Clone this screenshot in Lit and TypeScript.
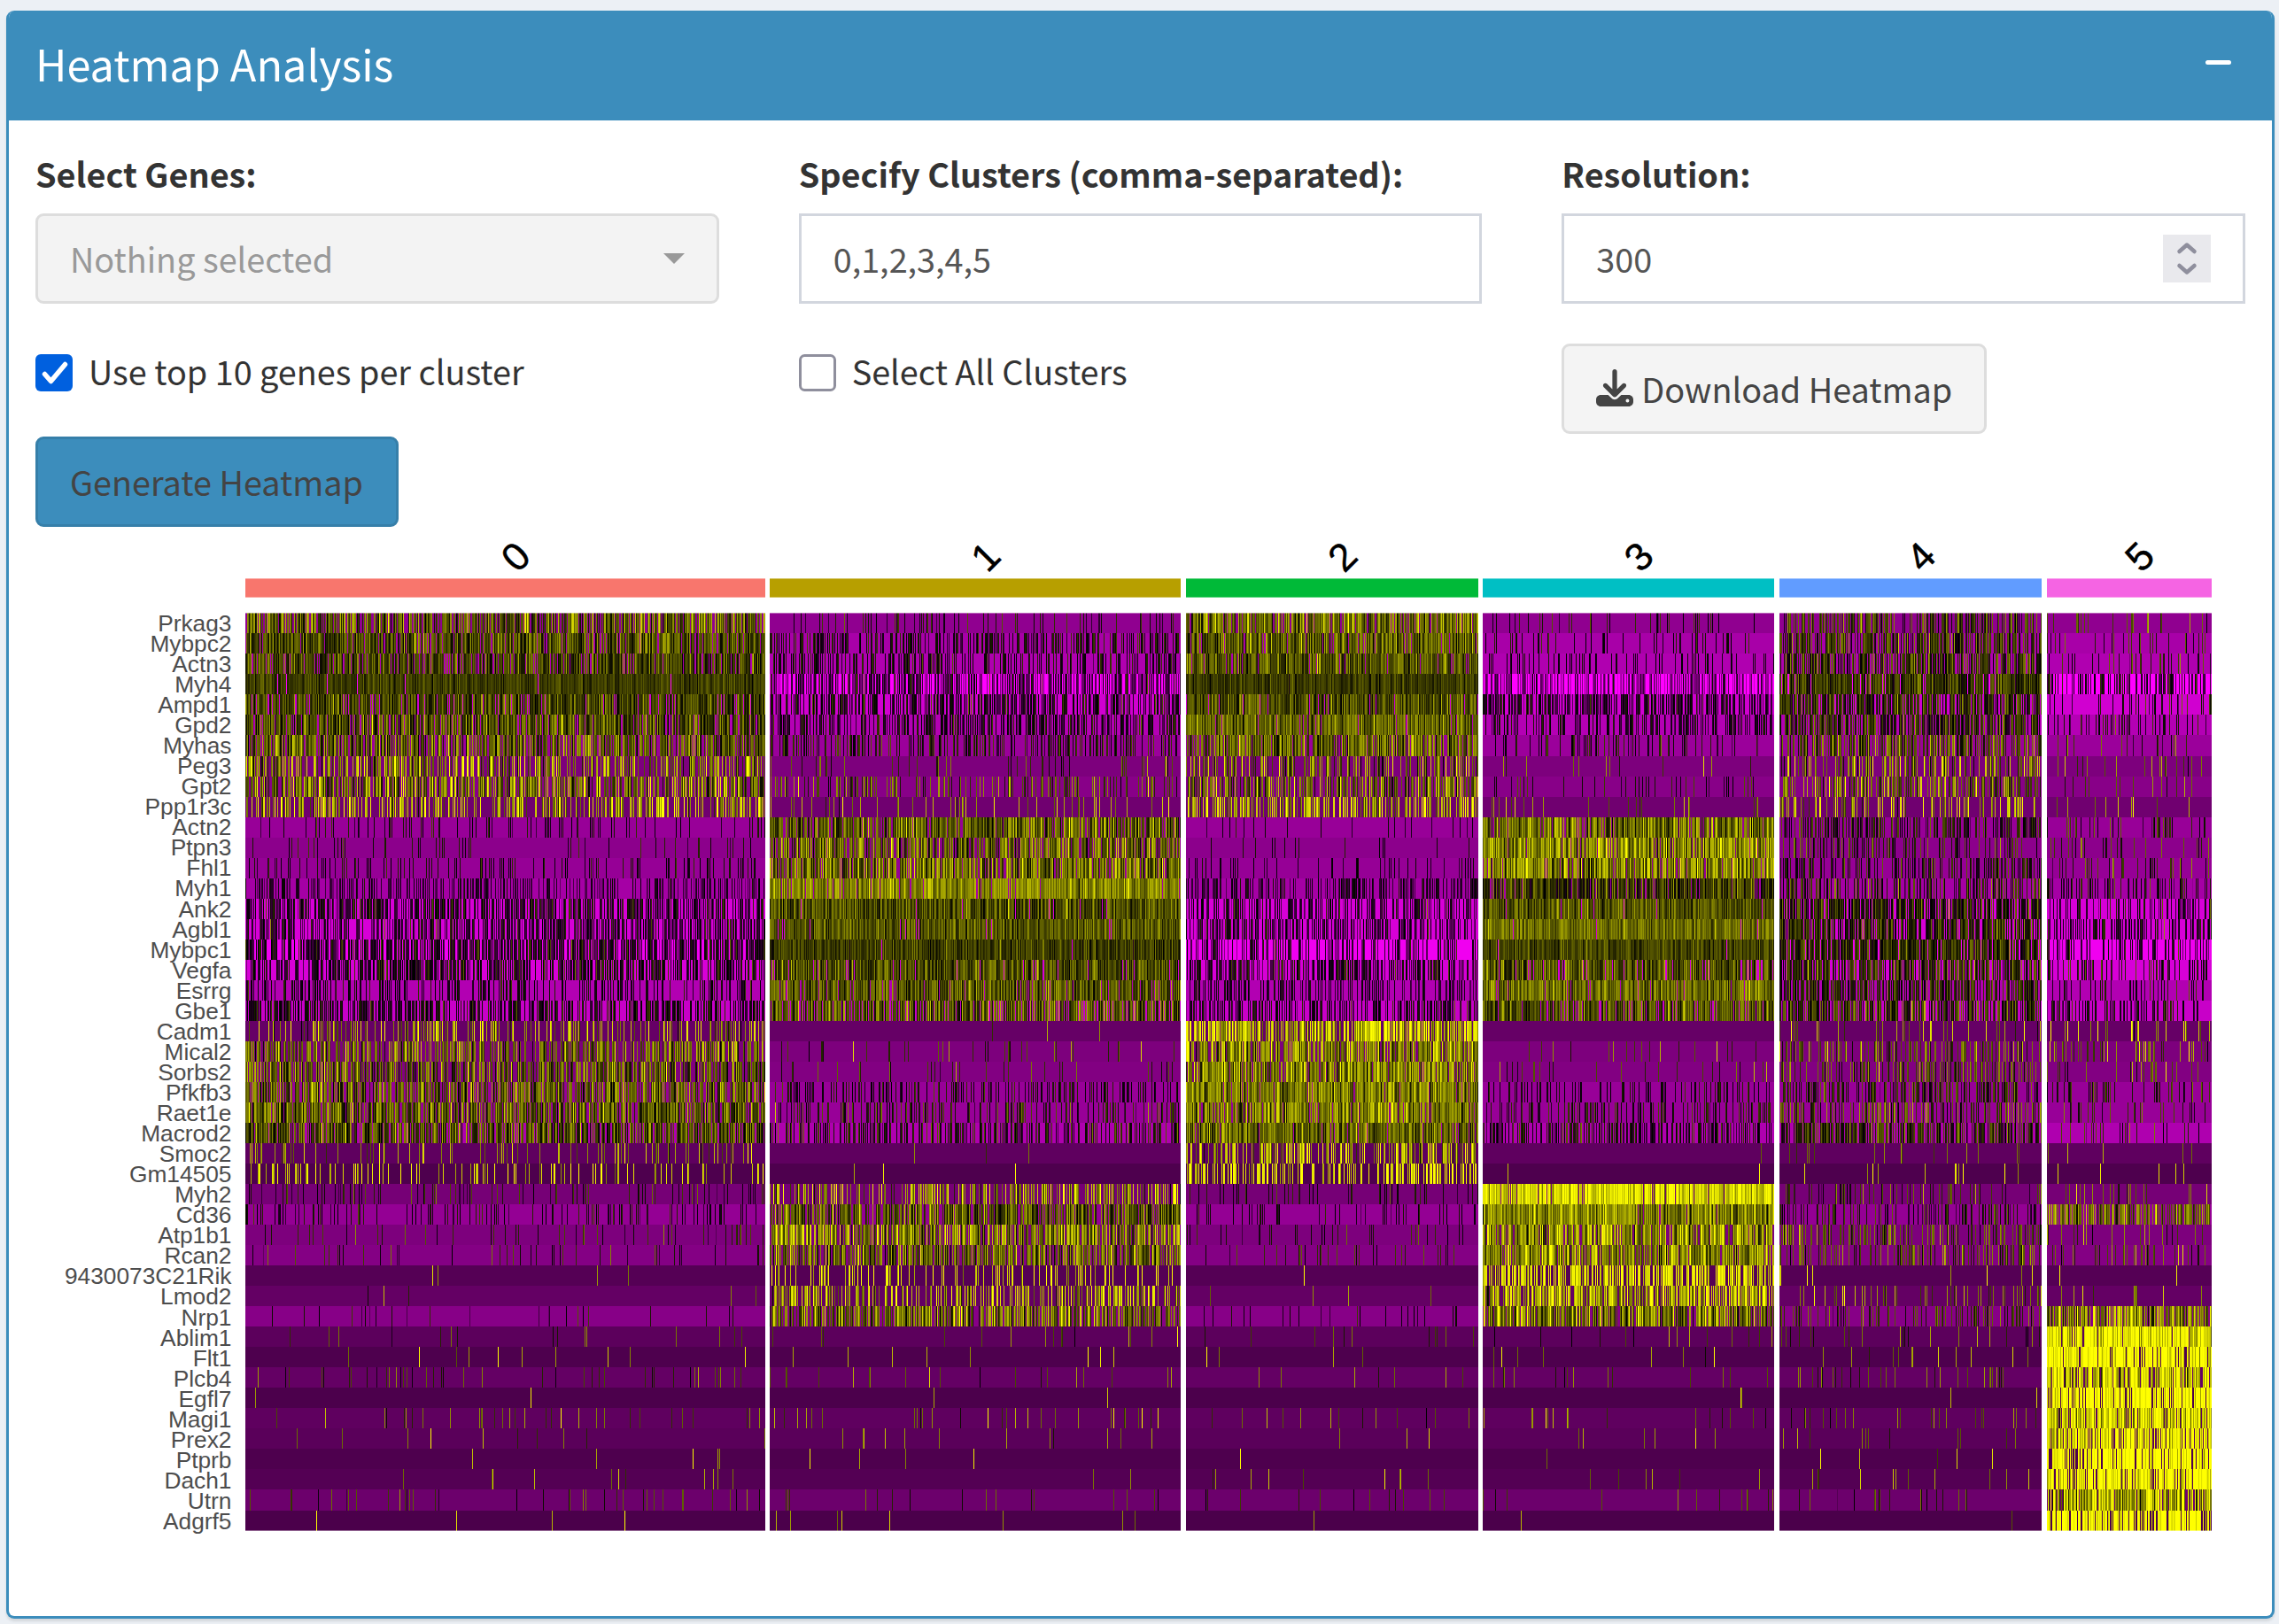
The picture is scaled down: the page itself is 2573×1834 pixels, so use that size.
import { LitElement, html, svg, css } from "lit";
import { customElement } from "lit/decorators.js";

interface Cluster {
  name: string;
  start: number;
  end: number;
  color: string;
}

const CLUSTERS: Cluster[] = [
  { name: "0", start: 277, end: 864, color: "#f8766d" },
  { name: "1", start: 869, end: 1333, color: "#b79f00" },
  { name: "2", start: 1339, end: 1669, color: "#00ba38" },
  { name: "3", start: 1674, end: 2003, color: "#00bfc4" },
  { name: "4", start: 2009, end: 2305, color: "#619cff" },
  { name: "5", start: 2311, end: 2497, color: "#f564e3" },
];

// gene | magenta level of non-expressing cells | per cluster: share of expressing cells, mean, spread
const GENES = `
Prkag3|144|.75 95 65|.14 20 40|.87 110 60|.1 20 35|.5 60 60|.1 90 70
Mybpc2|168|.88 75 50|.42 5 35|.93 90 50|.15 5 25|.65 50 50|.13 30 40
Actn3|176|.87 65 45|.38 0 35|.95 85 45|.15 -5 20|.72 50 50|.2 30 50
Myh4|255|.99 60 22|.68 -70 65|1 55 22|.5 -110 50|.94 55 40|.4 -20 40
Ampd1|208|.92 65 45|.5 -10 40|.95 75 45|.6 -30 40|.8 40 45|.2 10 40
Gpd2|180|.88 75 50|.5 -10 40|.95 100 40|.4 -20 30|.7 40 50|.2 10 40
Myhas|155|.75 90 60|.35 25 40|.85 100 60|.2 15 40|.6 70 60|.12 40 50
Peg3|125|.52 140 80|.1 70 70|.4 110 80|.06 80 80|.4 130 80|.07 110 80
Gpt2|136|.65 115 75|.25 80 70|.6 110 75|.1 20 40|.5 115 70|.08 80 60
Ppp1r3c|112|.45 175 70|.09 150 60|.5 180 70|.06 130 60|.3 170 70|.05 150 60
Actn2|152|.13 0 30|.85 95 60|.06 -10 20|.88 110 60|.5 25 45|.15 40 60
Ptpn3|140|.07 15 30|.78 105 65|.04 5 20|.93 140 60|.35 40 55|.1 50 50
Fhl1|150|.17 5 25|.8 110 65|.15 -10 20|.88 125 60|.4 20 45|.17 50 60
Myh1|165|.42 -35 35|.94 135 40|.45 -35 35|.92 50 50|.45 30 60|.35 0 50
Ank2|215|.6 -25 50|.97 75 45|.5 -40 45|.98 85 35|.8 25 45|.35 -20 50
Agbl1|215|.6 -40 50|.97 90 35|.5 -40 45|.99 110 35|.75 35 50|.4 -20 40
Mybpc1|240|.7 -20 45|.99 60 30|.4 -50 50|.99 65 28|.9 45 40|.38 -40 50
Vegfa|215|.6 -5 45|.93 75 45|.6 -20 45|.9 75 50|.75 40 55|.3 0 40
Esrrg|178|.35 -5 30|.93 85 45|.35 -30 30|.95 110 40|.7 30 45|.2 10 40
Gbe1|200|.6 -5 40|.8 80 60|.45 -15 40|.9 80 50|.7 50 60|.3 0 40
Cadm1|102|.3 160 70|.01 150 70|.75 200 70|.004 90 40|.1 140 70|.1 150 80
Mical2|125|.6 115 65|.07 70 60|.82 150 65|.05 70 60|.3 95 65|.15 110 60
Sorbs2|130|.65 90 65|.09 60 50|.85 130 65|.08 60 50|.35 80 60|.15 110 60
Pfkfb3|152|.75 95 60|.28 5 30|.95 125 50|.22 0 25|.5 40 50|.25 30 40
Raet1e|152|.8 90 60|.28 30 50|.93 125 55|.3 20 40|.45 65 60|.1 40 40
Macrod2|175|.8 65 60|.45 15 45|.94 100 50|.5 0 40|.6 40 55|.12 20 50
Smoc2|95|.14 140 70|.01 90 50|.45 190 70|.01 90 50|.05 100 60|.03 150 60
Gm14505|78|.16 230 50|.004 240 40|.42 235 40|.004 230 40|.04 210 50|.02 230 40
Myh2|118|.14 15 45|.42 170 80|.14 15 30|.95 220 50|.18 50 60|.12 100 80
Cd36|148|.16 0 30|.78 80 60|.15 -5 30|.96 130 55|.35 20 50|.7 120 60
Atp1b1|125|.08 45 50|.75 135 70|.06 30 40|.85 145 65|.38 90 60|.12 90 60
Rcan2|132|.07 40 50|.75 105 65|.1 45 45|.9 130 65|.33 80 60|.15 80 60
9430073C21Rik|85|.006 200 50|.18 220 50|.006 170 60|.6 225 45|.03 200 60|.01 240 30
Lmod2|100|.012 130 60|.42 180 70|.01 110 50|.7 190 65|.14 130 60|.03 120 60
Nrp1|135|.03 0 40|.75 105 70|.09 -5 30|.85 115 70|.28 50 50|.8 130 75
Ablim1|92|.03 60 50|.025 110 70|.02 70 50|.03 100 70|.06 80 60|.97 240 60
Flt1|78|.022 180 60|.02 200 60|.015 160 60|.01 160 70|.035 130 60|.86 260 50
Plcb4|100|.07 60 50|.04 110 60|.035 90 60|.04 90 60|.09 80 60|.88 215 70
Egfl7|76|.006 180 60|.012 180 60|.006 170 60|.006 160 60|.006 200 50|.82 265 50
Magi1|95|.06 100 60|.06 120 70|.05 90 60|.05 110 70|.08 80 60|.9 215 65
Prex2|90|.016 130 60|.02 130 60|.012 120 60|.015 110 60|.022 100 50|.8 240 60
Ptprb|78|.008 200 50|.01 200 60|.008 180 60|.006 180 60|.014 200 60|.76 265 40
Dach1|84|.014 140 60|.013 130 60|.03 160 70|.015 130 60|.03 130 60|.83 260 50
Utrn|108|.05 50 60|.04 60 50|.03 30 40|.04 70 50|.04 40 50|.88 170 80
Adgrf5|75|.008 190 60|.012 170 60|.006 180 60|.006 160 60|.008 140 60|.77 262 40`
  .trim()
  .split("\n")
  .map((line) => {
    const [name, base, ...stats] = line.split("|");
    return { name, base: Number(base), stats: stats.map((s) => s.split(" ").map(Number)) };
  });

const TOP = 692;
const rowHeight = (i: number) => (i === 6 || i === 43 ? 24 : 23);
const ROWS: { y: number; h: number }[] = [];
GENES.reduce((y, _, i) => {
  ROWS.push({ y, h: rowHeight(i) });
  return y + rowHeight(i);
}, TOP);
const BOTTOM = 1729;

function randomSource(seed: number) {
  let a = seed;
  return () => {
    a = (a + 0x6d2b79f5) | 0;
    let t = Math.imul(a ^ (a >>> 15), 1 | a);
    t = (t + Math.imul(t ^ (t >>> 7), 61 | t)) ^ t;
    return ((t ^ (t >>> 14)) >>> 0) / 4294967296;
  };
}

function shade(v: number): string {
  const n = Math.min(255, Math.abs(v));
  return v < 0 ? `rgb(${n},0,${n})` : `rgb(${n},${n},0)`;
}

// Cells of one colour are collected into a single path.
function buildCells(): [string, string][] {
  const rand = randomSource(4117);
  const gauss = () => Math.sqrt(-2 * Math.log(rand() + 1e-9)) * Math.cos(2 * Math.PI * rand());
  const paths = new Map<number, string[]>();
  const add = (v: number, x0: number, x1: number, y: number, h: number) => {
    if (!paths.has(v)) paths.set(v, []);
    paths.get(v)!.push(`M${x0} ${y}h${x1 - x0}v${h}h${x0 - x1}z`);
  };
  GENES.forEach((gene, i) => {
    const { y, h } = ROWS[i];
    CLUSTERS.forEach((c, k) => {
      const [share, mean, spread] = gene.stats[k];
      let from = c.start;
      let last: number | null = null;
      for (let x = c.start; x < c.end; x++) {
        let v = -gene.base;
        if (rand() < share) {
          v = Math.round((mean + gauss() * spread) / 12) * 12;
          if (mean > 60 && v < 0) v = Math.round(-v / 24) * 12;
          v = Math.max(-gene.base, Math.min(255, v));
        }
        if (last !== null && v !== last) {
          add(last, from, x, y, h);
          from = x;
        }
        last = v;
      }
      add(last!, from, c.end, y, h);
    });
  });
  return [...paths].map(([v, d]) => [shade(v), d.join("")]);
}

const CELLS = buildCells();

@customElement("heatmap-plot")
export class HeatmapPlot extends LitElement {
  static styles = css`
    :host { display: block; }
    svg { display: block; width: 2495px; height: 1200px; }
    .cells { shape-rendering: crispEdges; }
    .gene {
      font: 26.3px "Liberation Sans", Arial, sans-serif;
      fill: #4d4d4d;
      text-anchor: end;
    }
    .cluster {
      font: 44px "Liberation Sans", Arial, sans-serif;
      fill: #000;
      stroke: #000;
      stroke-width: 0.5px;
      text-anchor: middle;
    }
    .edge { fill: #fff; opacity: 0.4; }
  `;

  render() {
    return html`<svg viewBox="40 595 2495 1200">
      ${CLUSTERS.map(
        (c) => svg`
          <text class="cluster"
            transform="translate(${(c.start + c.end) / 2 + 11.5} 628.5) rotate(-45)" y="15.5">${c.name}</text>
          <rect x=${c.start} y="653.4" width=${c.end - c.start} height="21.2" fill=${c.color}></rect>`
      )}
      <g class="cells">${CELLS.map(([fill, d]) => svg`<path fill=${fill} d=${d}></path>`)}</g>
      <rect class="edge" x="277" y=${TOP} width="2220" height="1"></rect>
      <rect class="edge" x="277" y=${BOTTOM - 1} width="2220" height="1"></rect>
      ${GENES.map(
        (g, i) => svg`<text class="gene" x="261.5" y=${(712.8 + i * 23.05).toFixed(2)}>${g.name}</text>`
      )}
    </svg>`;
  }
}

@customElement("app-root")
export class AppRoot extends LitElement {
  static styles = css`
    :host {
      display: block;
      box-sizing: border-box;
      width: 2573px;
      height: 1834px;
      padding: 12px 5px 6px 7px;
      background: #ecf0f5;
      color: #333;
      font: 37.8px/60px "Noto Sans CJK SC", "Open Sans", sans-serif;
      overflow: hidden;
    }
    * { box-sizing: border-box; }
    .box {
      height: 1816px;
      border: 3px solid #3c8dbc;
      border-top: 0;
      border-radius: 9px;
      background: #fff;
      box-shadow: 0 3px 3px rgba(0, 0, 0, 0.1);
      overflow: hidden;
    }
    .header {
      display: flex;
      align-items: center;
      justify-content: space-between;
      height: 124px;
      padding: 0 46px 0 30px;
      background: #3c8dbc;
      color: #fff;
    }
    .title { margin: 0 0 7px; font-size: 48.6px; font-weight: 400; line-height: 60px; }
    .minus { width: 29px; height: 5px; margin-bottom: 7px; border-radius: 2.5px; background: #fff; }
    .body { padding: 30px; }
    .grid { display: grid; grid-template-columns: repeat(3, 1fr); column-gap: 90px; height: 429px; }
    .label { display: block; height: 60px; margin-bottom: 15px; font-weight: 700; white-space: nowrap; }
    .control {
      display: flex;
      align-items: center;
      justify-content: space-between;
      height: 102px;
      padding: 0 36px;
      border: 3px solid #d2d6de;
      background: #fff;
      color: #555;
    }
    .control > span { margin-bottom: 1px; }
    .control.select { border-color: #ddd; border-radius: 9px; background: #f3f3f3; color: #999; }
    .caret { width: 24px; border: 12px solid transparent; border-top-color: #999; border-bottom: 0; }
    .spinner { width: 54px; height: 54px; background: #e9e9ed; }
    .check { display: flex; align-items: center; gap: 18px; height: 60px; margin-top: 48px; color: #333; }
    .check > span { margin-bottom: 5px; }
    .tick { width: 42px; height: 42px; }
    .btn {
      display: inline-flex;
      align-items: center;
      height: 102px;
      padding: 0 36px;
      border: 3px solid #ddd;
      border-radius: 9px;
      background: #f4f4f4;
      color: #444;
      white-space: nowrap;
    }
    .btn.primary { min-width: 410px; margin-top: 42px; border-color: #367fa9; background: #3c8dbc; }
    .btn.download { margin-top: 45px; gap: 9px; }
    .btn svg { width: 42px; height: 42px; margin-top: -2px; }
    svg { display: block; flex: none; }
  `;

  render() {
    return html`
      <section class="box">
        <header class="header">
          <h3 class="title">Heatmap Analysis</h3>
          <span class="minus"></span>
        </header>
        <div class="body">
          <div class="grid">
            <div>
              <span class="label">Select Genes:</span>
              <div class="control select"><span>Nothing selected</span><i class="caret"></i></div>
              <div class="check">
                <svg class="tick" viewBox="0 0 42 42">
                  <rect width="42" height="42" rx="6" fill="#0060df"></rect>
                  <path d="M10.5 22.5l7 8L33.500 11.500" fill="none" stroke="#fff" stroke-width="5.5" stroke-linecap="round" stroke-linejoin="round"></path>
                </svg>
                <span>Use top 10 genes per cluster</span>
              </div>
              <div class="btn primary">Generate Heatmap</div>
            </div>
            <div>
              <span class="label">Specify Clusters (comma-separated):</span>
              <div class="control"><span>0,1,2,3,4,5</span></div>
              <div class="check">
                <svg class="tick" viewBox="0 0 42 42">
                  <rect x="1.500" y="1.500" width="39" height="39" rx="5" fill="#fff" stroke="#8f8f9d" stroke-width="3"></rect>
                </svg>
                <span>Select All Clusters</span>
              </div>
            </div>
            <div>
              <span class="label">Resolution:</span>
              <div class="control">
                <span>300</span>
                <svg class="spinner" viewBox="0 0 54 54" fill="none" stroke="#8f8f9d" stroke-width="4.500" stroke-linecap="round" stroke-linejoin="round">
                  <path d="M18.500 19L27 11.500L35.500 19M18.500 35L27 42.500L35.500 35"></path>
                </svg>
              </div>
              <div class="btn download">
                <svg viewBox="0 0 512 512" fill="#444">
                  <path d="M288 32c0-17.700-14.300-32-32-32s-32 14.300-32 32V274.700l-73.400-73.400c-12.500-12.500-32.800-12.500-45.300 0s-12.500 32.800 0 45.300l128 128c12.500 12.500 32.800 12.500 45.300 0l128-128c12.500-12.500 12.500-32.800 0-45.300s-32.800-12.500-45.300 0L288 274.700V32zM64 352c-35.300 0-64 28.700-64 64v32c0 35.300 28.700 64 64 64H448c35.300 0 64-28.700 64-64V416c0-35.300-28.700-64-64-64H346.500l-45.300 45.300c-25 25-65.500 25-90.500 0L165.500 352H64zm368 56a24 24 0 1 1 0 48 24 24 0 1 1 0-48z"></path>
                </svg>
                <span>Download Heatmap</span>
              </div>
            </div>
          </div>
          <heatmap-plot></heatmap-plot>
        </div>
      </section>
    `;
  }
}
